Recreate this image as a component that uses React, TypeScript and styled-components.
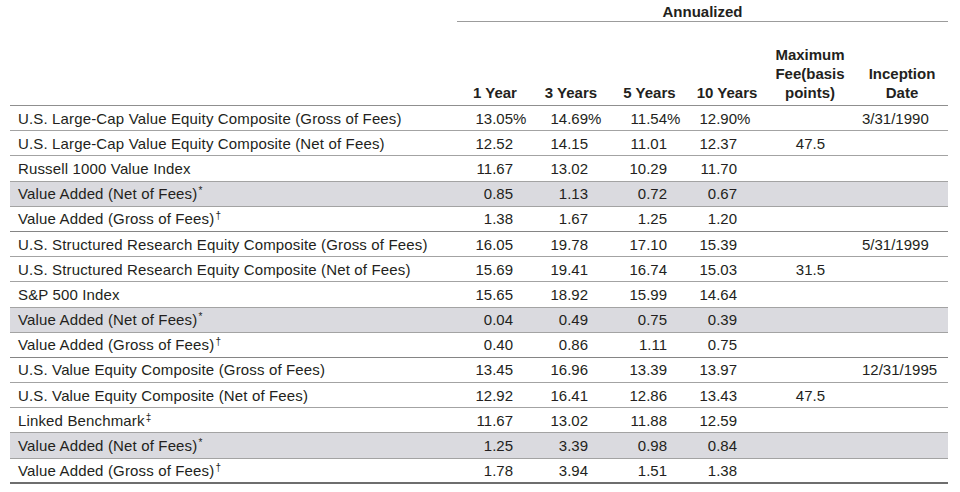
import React from 'react';
import styled, {createGlobalStyle} from "styled-components";

const GlobalStyle = createGlobalStyle`
  html, body {
    margin: 0;
    padding: 0;
    background: #ffffff;
  }

  body {
    font-family: "Liberation Sans", Arial, Helvetica, sans-serif;
    color: #231f20;
  }
`

// label, 1Y, 3Y, 5Y, 10Y, fee, inception
const COLS = '447px 76px 76px 81px 74px 92px 92px'
const NUM_PAD = [20, 21, 23, 27]

const Table = styled.div`
  margin: 0 12px 0 10px;
  width: 938px;
  font-size: 15px;
`

const TopRow = styled.div`
  display: grid;
  grid-template-columns: ${COLS};
`

const Annualized = styled.div`
  grid-column: 2 / 8;
  height: 22px;
  box-sizing: border-box;
  padding-top: 2px;
  line-height: 19px;
  text-align: center;
  font-weight: bold;
  border-bottom: 1px solid #9c9c9c;
`

const HeadRow = styled.div`
  display: grid;
  grid-template-columns: ${COLS};
  height: 84px;
  box-sizing: border-box;
  border-bottom: 1px solid #8f8f8f;
  align-items: end;
`

const HeadCell = styled.div`
  font-weight: bold;
  line-height: 19px;
  text-align: center;
  padding-bottom: 3px;
`

const Row = styled.div<{ $shaded?: boolean, $groupEnd?: boolean, $last?: boolean }>`
  display: grid;
  grid-template-columns: ${COLS};
  height: 25.2px;
  box-sizing: border-box;
  align-items: center;
  background-color: ${p => p.$shaded ? '#dadadf' : 'transparent'};
  border-bottom: ${p => p.$last ? '2px solid #6e6e6e' : p.$groupEnd ? '1.5px solid #858585' : '1px solid #a3a3a3'};
`

const Label = styled.div`
  padding-left: 8px;
  letter-spacing: 0.15px;
  white-space: nowrap;
`

const Num = styled.div<{ $pad: number }>`
  text-align: right;
  padding-right: ${p => p.$pad}px;
  white-space: nowrap;
`

const Pct = styled.span`
  display: inline-block;
  width: 12px;
  margin-right: -12px;
  text-align: left;
`

const Fee = styled.div`
  text-align: right;
  padding-right: 31px;
`

const DateCell = styled.div`
  text-align: left;
  padding-left: 6px;
`

const Mark = styled.sup`
  font-size: 10px;
  line-height: 0;
  vertical-align: 5px;
  margin-left: 1px;
`

type Line = {
    label: string,
    mark?: string,
    vals: string[],
    fee?: string,
    date?: string,
    shaded?: boolean
}

const groups: Line[][] = [
    [
        {label: 'U.S. Large-Cap Value Equity Composite (Gross of Fees)', vals: ['13.05%', '14.69%', '11.54%', '12.90%'], date: '3/31/1990'},
        {label: 'U.S. Large-Cap Value Equity Composite (Net of Fees)', vals: ['12.52', '14.15', '11.01', '12.37'], fee: '47.5'},
        {label: 'Russell 1000 Value Index', vals: ['11.67', '13.02', '10.29', '11.70']},
        {label: 'Value Added (Net of Fees)', mark: '*', vals: ['0.85', '1.13', '0.72', '0.67'], shaded: true},
        {label: 'Value Added (Gross of Fees)', mark: '†', vals: ['1.38', '1.67', '1.25', '1.20']},
    ],
    [
        {label: 'U.S. Structured Research Equity Composite (Gross of Fees)', vals: ['16.05', '19.78', '17.10', '15.39'], date: '5/31/1999'},
        {label: 'U.S. Structured Research Equity Composite (Net of Fees)', vals: ['15.69', '19.41', '16.74', '15.03'], fee: '31.5'},
        {label: 'S&P 500 Index', vals: ['15.65', '18.92', '15.99', '14.64']},
        {label: 'Value Added (Net of Fees)', mark: '*', vals: ['0.04', '0.49', '0.75', '0.39'], shaded: true},
        {label: 'Value Added (Gross of Fees)', mark: '†', vals: ['0.40', '0.86', '1.11', '0.75']},
    ],
    [
        {label: 'U.S. Value Equity Composite (Gross of Fees)', vals: ['13.45', '16.96', '13.39', '13.97'], date: '12/31/1995'},
        {label: 'U.S. Value Equity Composite (Net of Fees)', vals: ['12.92', '16.41', '12.86', '13.43'], fee: '47.5'},
        {label: 'Linked Benchmark', mark: '‡', vals: ['11.67', '13.02', '11.88', '12.59']},
        {label: 'Value Added (Net of Fees)', mark: '*', vals: ['1.25', '3.39', '0.98', '0.84'], shaded: true},
        {label: 'Value Added (Gross of Fees)', mark: '†', vals: ['1.78', '3.94', '1.51', '1.38']},
    ],
]

function NumValue({value}: { value: string }) {
    if (value.endsWith('%')) {
        return <>{value.slice(0, -1)}<Pct>%</Pct></>
    }
    return <>{value}</>
}

function App() {
    return (
        <Table>
            <GlobalStyle/>
            <TopRow>
                <Annualized>Annualized</Annualized>
            </TopRow>
            <HeadRow>
                <HeadCell/>
                <HeadCell>1 Year</HeadCell>
                <HeadCell>3 Years</HeadCell>
                <HeadCell>5 Years</HeadCell>
                <HeadCell>10 Years</HeadCell>
                <HeadCell>Maximum<br/>Fee(basis<br/>points)</HeadCell>
                <HeadCell>Inception<br/>Date</HeadCell>
            </HeadRow>
            {groups.map((group, gi) => group.map((line, li) => (
                <Row key={gi + '-' + li} $shaded={line.shaded}
                     $groupEnd={li === group.length - 1}
                     $last={gi === groups.length - 1 && li === group.length - 1}>
                    <Label>{line.label}{line.mark && <Mark>{line.mark}</Mark>}</Label>
                    {line.vals.map((v, i) => (
                        <Num key={i} $pad={NUM_PAD[i]}><NumValue value={v}/></Num>
                    ))}
                    <Fee>{line.fee}</Fee>
                    <DateCell>{line.date}</DateCell>
                </Row>
            )))}
        </Table>
    );
}

export default App;
